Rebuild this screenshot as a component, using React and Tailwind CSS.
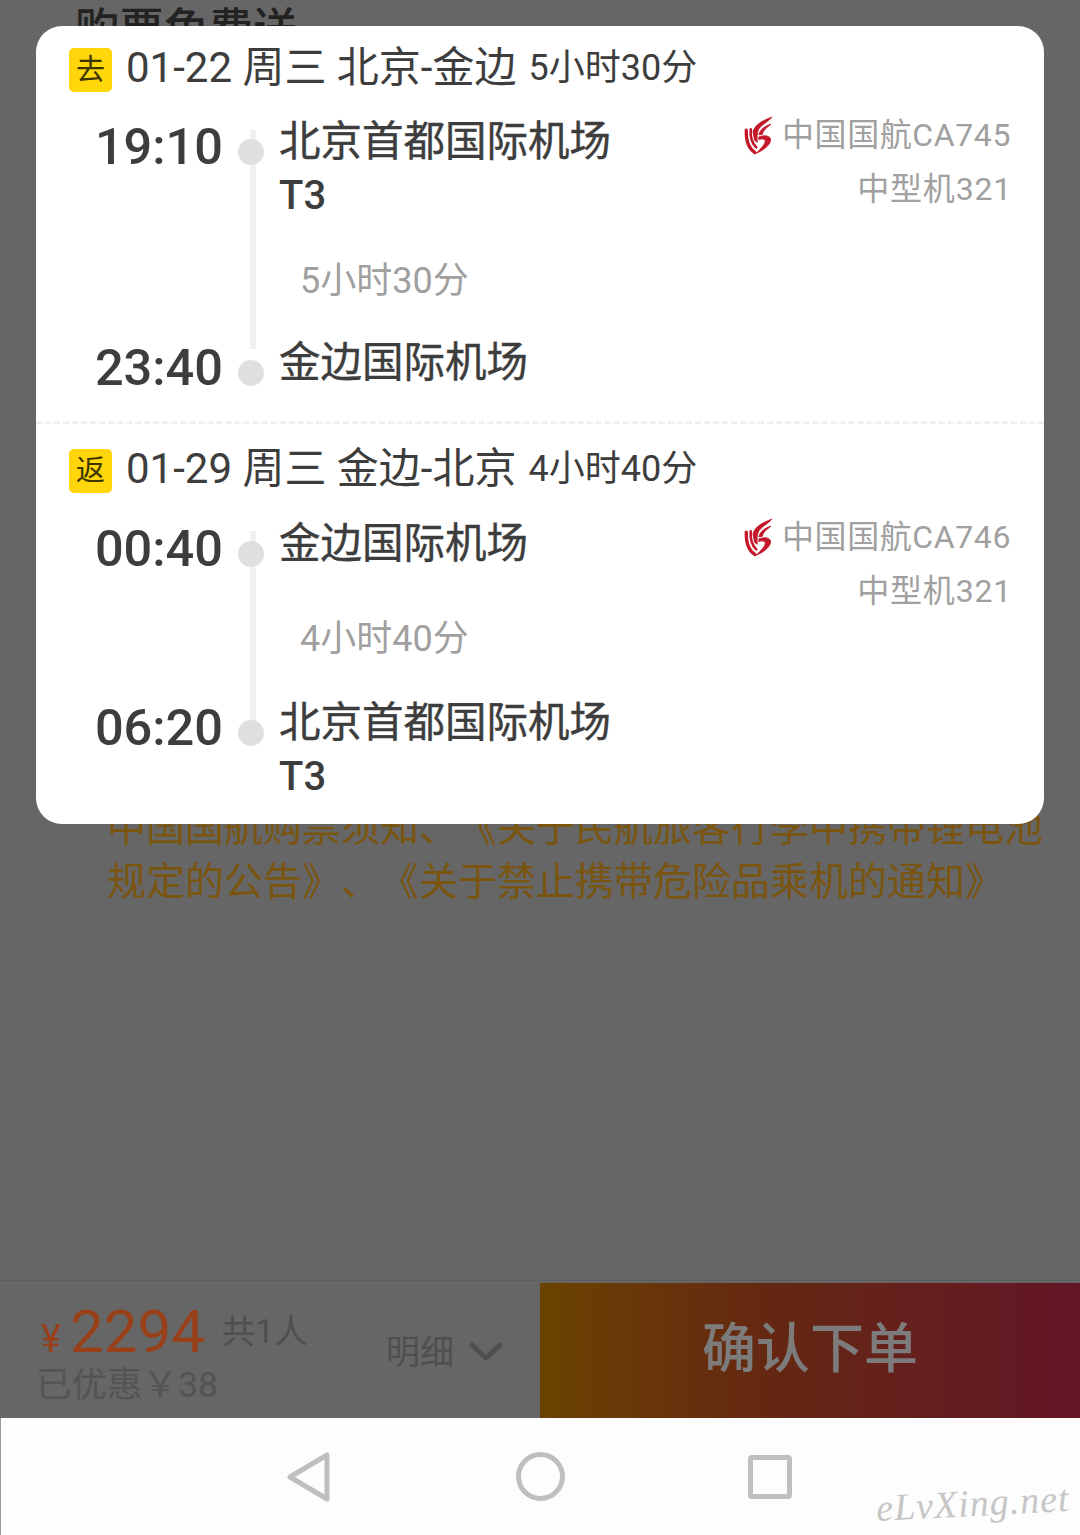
function AirChina() {
  return (
    <svg width="29" height="39" viewBox="26 10 90 118" className="shrink-0">
      <g fill="#c4182a" stroke="#c4182a" strokeWidth="3" strokeLinejoin="round">
        <path d="M54 58 C60 35 85 22 113 12 C98 28 78 36 70 52 C66 62 66 72 67 90 L59 84 Z" />
        <path d="M72 66 C78 48 92 40 109 34 C98 44 86 50 82 66 Z" />
        <path d="M72 74 C85 68 105 68 108 80 C110 95 92 112 64 124 C80 108 92 96 92 86 C92 80 84 78 72 81 Z" />
      </g>
      <g fill="none" stroke="#c4182a" strokeLinecap="round">
        <path d="M33 52 C32 80 38 108 60 122" strokeWidth="10" />
        <path d="M47 50 C45 72 50 92 64 106" strokeWidth="8" />
      </g>
    </svg>
  );
}

function Row({ time, name, sub, right }) {
  return (
    <div className="relative z-10 flex items-start">
      <div className="mt-[5px] w-[187px] text-right text-[50.5px] leading-[54px] font-medium text-[#3d3d3d]">{time}</div>
      <div className="mt-[24px] ml-[15px] h-[26px] w-[26px] shrink-0 rounded-full bg-[#dfdfdf]" />
      <div className="ml-[15px] text-[41.5px] leading-[54px] text-[#3d3d3d] [-webkit-text-stroke:0.4px_#3d3d3d]">
        <div>{name}</div>
        {sub && <div className="text-[40px] font-medium [-webkit-text-stroke:0]">{sub}</div>}
      </div>
      {right && (
        <div className="mt-[-7px] mr-[33px] ml-auto flex flex-col items-end text-[32px] leading-[54px] text-[#a0a0a0]">
          <div className="flex h-[54px] items-center gap-[9px] tracking-[0.6px]">
            <AirChina />
            <span>{right[0]}</span>
          </div>
          <div className="mr-[-1px] tracking-[0.8px]">{right[1]}</div>
        </div>
      )}
    </div>
  );
}

function Leg({ tag, date, total, dep, arr, right, headGap, lineClass, gapClass }) {
  return (
    <div className="relative">
      <div className={`flex items-center pl-[33px] ${headGap}`}>
        <div className="mt-[4px] flex h-[44px] w-[43px] items-center justify-center rounded-[5px] bg-[#ffd60a] text-[29px] leading-none text-[#3d3500]">{tag}</div>
        <div className="ml-[14px] text-[42px] leading-[54px] text-[#3d3d3d]">{date}</div>
        <div className="ml-[12px] text-[36px] leading-[54px] text-[#3d3d3d]">{total}</div>
      </div>
      <div className="relative">
        <div className={`absolute left-[214px] w-[6px] bg-[#f1f1f1] ${lineClass}`} />
        <Row time={dep.time} name={dep.name} sub={dep.sub} right={right} />
        <div className={`relative z-10 pl-[264px] text-[36px] leading-[54px] text-[#a0a0a0] ${gapClass}`}>{total}</div>
        <Row time={arr.time} name={arr.name} sub={arr.sub} />
      </div>
    </div>
  );
}

function Triangle() {
  return (
    <svg width="46" height="52" viewBox="0 0 46 52" className="shrink-0">
      <path d="M41 4 V48 L4 26 Z" fill="none" stroke="#bfbfbf" strokeWidth="5" strokeLinejoin="round" />
    </svg>
  );
}

export default function App() {
  return (
    <div className="relative flex h-[1535px] w-[1080px] flex-col overflow-hidden bg-[#fdfdfd] font-['Roboto','Noto_Sans_CJK_SC',sans-serif]">
      <div className="flex h-[1280px] flex-col bg-[#666666] pl-[1px]">
        <div className="ml-[74px] h-[26px] overflow-hidden text-[44.5px] leading-[60px] font-medium text-[#222222]">购票免费送</div>
        <div className="mt-[775px] ml-[106px] w-[970px] text-[39px] leading-[54px] text-[#7a5510] [text-spacing-trim:space-all]">
          <div className="whitespace-nowrap">中国国航购票须知、《关于民航旅客行李中携带锂电池</div>
          <div className="whitespace-nowrap">规定的公告》、《关于禁止携带危险品乘机的通知》</div>
        </div>
      </div>

      <div className="flex h-[138px] border-t border-[#5e5e5e] bg-[#666666]">
        <div className="flex w-[540px] items-start pt-[17px]">
          <div className="ml-[36px] w-[300px] text-[#4f4f4f]">
            <div className="flex h-[65px] items-baseline">
              <span className="ml-[5px] text-[38px] text-[#98401a]">¥</span>
              <span className="ml-[9px] text-[60px] leading-[68px] text-[#98401a]">2294</span>
              <span className="ml-[17px] -translate-y-[9px] text-[33.5px] text-[#4f4f4f]">共1人</span>
            </div>
            <div className="text-[35.5px] leading-[44px] text-[#545454]">已优惠￥38</div>
          </div>
          <div className="mt-[29px] ml-[50px] flex items-center">
            <span className="text-[34px] leading-[50px] text-[#4f4f4f]">明细</span>
            <svg width="36" height="24" viewBox="0 0 36 24" className="ml-[14px]">
              <path d="M4 5 L18 18 L32 5" fill="none" stroke="#4f4f4f" strokeWidth="5" strokeLinecap="round" strokeLinejoin="round" />
            </svg>
          </div>
        </div>
        <div className="mt-[2px] flex w-[540px] items-center justify-center bg-gradient-to-r from-[#6b4300] via-[#652810] via-40% to-[#631526] pb-[2px] text-[54px] font-medium text-[#7c7c7c]">确认下单</div>
      </div>

      <div className="relative flex h-[117px] items-center border-l border-[#9a9a9a]">
        <div className="ml-[285px]"><Triangle /></div>
        <div className="ml-[184px] h-[49px] w-[49px] rounded-full border-[5px] border-[#bfbfbf]" />
        <div className="ml-[183px] h-[44px] w-[44px] rounded-[4px] border-[5px] border-[#bfbfbf]" />
        <div className="absolute right-[10px] bottom-[10px] -rotate-[3deg] font-['Liberation_Serif',serif] text-[38px] leading-[44px] tracking-[1px] text-[#c6c6c6] italic">eLvXing.net</div>
      </div>

      <div className="absolute top-[26px] left-[36px] h-[798px] w-[1008px] rounded-[26px] bg-white pt-[15px]">
        <Leg
          tag="去"
          date="01-22 周三 北京-金边"
          total="5小时30分"
          dep={{ time: "19:10", name: "北京首都国际机场", sub: "T3" }}
          arr={{ time: "23:40", name: "金边国际机场" }}
          right={["中国国航CA745", "中型机321"]}
          headGap="mb-[20px]"
          lineClass="top-[15px] bottom-[46px]"
          gapClass="mt-[31px] mb-[28px]"
        />
        <div className="mt-[26px] mb-[18px] border-t-[3px] border-dashed border-[#f0f0f0]" />
        <Leg
          tag="返"
          date="01-29 周三 金边-北京"
          total="4小时40分"
          dep={{ time: "00:40", name: "金边国际机场" }}
          arr={{ time: "06:20", name: "北京首都国际机场", sub: "T3" }}
          right={["中国国航CA746", "中型机321"]}
          headGap="mb-[21px]"
          lineClass="top-[14px] bottom-[75px]"
          gapClass="mt-[-6px] mb-[30px]"
        />
      </div>
    </div>
  );
}
